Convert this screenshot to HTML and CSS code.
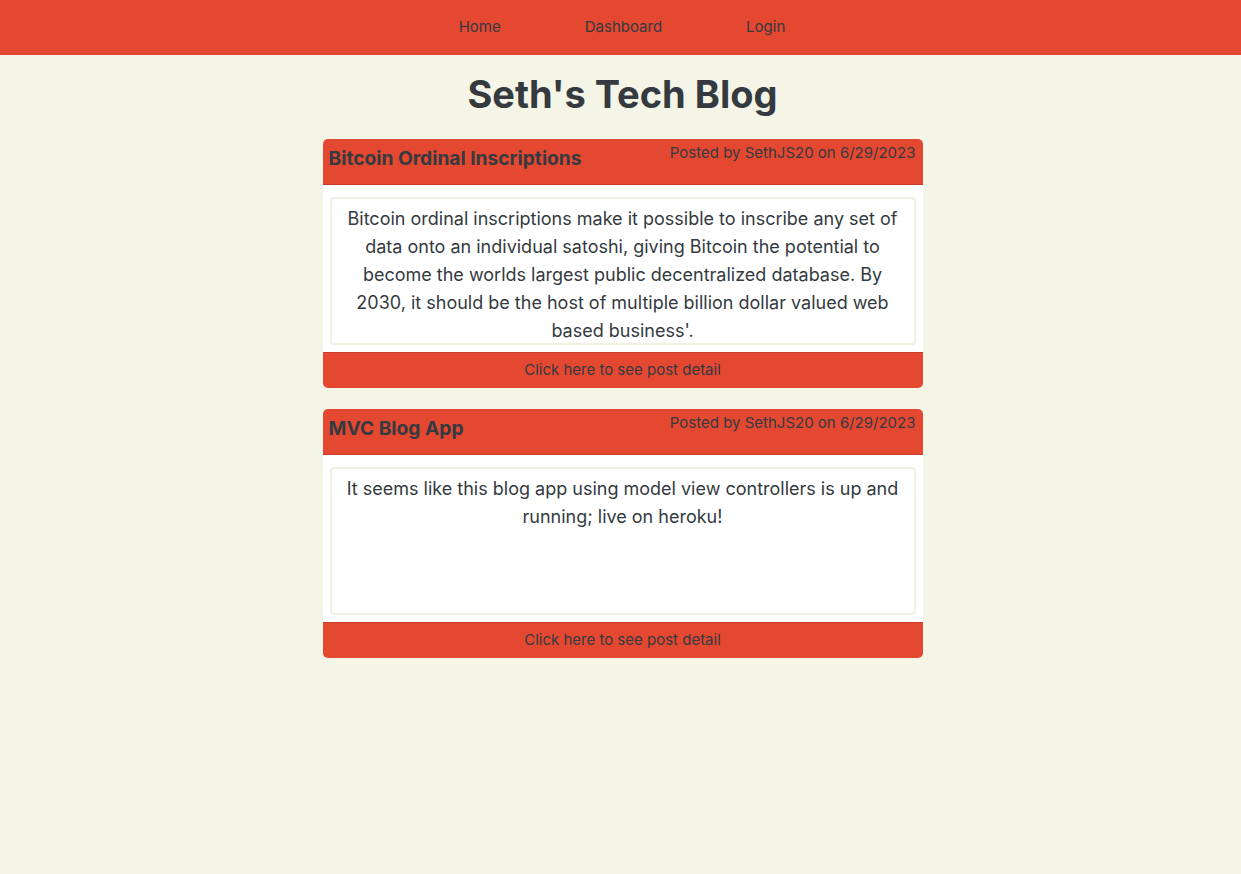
FILE: index.html
```html
<!DOCTYPE html>
<html lang="en">
<head>
<meta charset="utf-8">
<title>Seth's Tech Blog</title>
<link rel="stylesheet" href="styles.css">
</head>
<body>
<nav class="topnav">
  <a class="nav-link" href="#">Home</a>
  <a class="nav-link" href="#">Dashboard</a>
  <a class="nav-link" href="#">Login</a>
</nav>
<main class="content">
  <h1 class="site-title">Seth's Tech Blog</h1>
  <section class="posts">
    <article class="post-card">
      <header class="post-head">
        <h2 class="post-title">Bitcoin Ordinal Inscriptions</h2>
        <span class="post-meta">Posted by SethJS20 on 6/29/2023</span>
      </header>
      <div class="post-body">
        <p class="post-text">Bitcoin ordinal inscriptions make it possible to inscribe any set of data onto an individual satoshi, giving Bitcoin the potential to become the worlds largest public decentralized database. By 2030, it should be the host of multiple billion dollar valued web based business'.</p>
      </div>
      <a class="post-foot" href="#">Click here to see post detail</a>
    </article>
    <article class="post-card">
      <header class="post-head">
        <h2 class="post-title">MVC Blog App</h2>
        <span class="post-meta">Posted by SethJS20 on 6/29/2023</span>
      </header>
      <div class="post-body">
        <p class="post-text">It seems like this blog app using model view controllers is up and running; live on heroku!</p>
      </div>
      <a class="post-foot" href="#">Click here to see post detail</a>
    </article>
  </section>
</main>
</body>
</html>
```

FILE: styles.css
```css
* { box-sizing: border-box; }
html, body { margin: 0; padding: 0; }
body {
  background: #f4f4e7;
  color: #343a40;
  font-family: Inter, "Noto Sans", sans-serif;
  font-size: 15px;
  min-height: 874px;
}
.topnav {
  background: #e54831;
  height: 55px;
  display: flex;
  justify-content: center;
  align-items: center;
  padding-left: 3px;
}
.nav-link {
  color: #343a40;
  text-decoration: none;
  font-size: 15px;
  padding: 0 42px;
  line-height: 22px;
  margin-top: -2px;
}
.content {
  display: flex;
  flex-direction: column;
  align-items: center;
  padding-left: 4px;
}
.site-title {
  margin: 16px 0 22px;
  font-size: 38px;
  line-height: 46px;
  font-weight: 700;
  color: #343a40;
}
.posts {
  width: 600px;
  display: flex;
  flex-direction: column;
  gap: 21px;
}
.post-card {
  border-radius: 5px;
  overflow: hidden;
  background: #fff;
  display: flex;
  flex-direction: column;
}
.post-head {
  background: #e54831;
  height: 46px;
  border-bottom: 1px solid #c83d29;
  display: flex;
  justify-content: space-between;
  align-items: flex-start;
  padding: 3px 7px 0 6px;
}
.post-title {
  margin: 5px 0 0;
  font-size: 19.2px;
  line-height: 22px;
  font-weight: 700;
}
.post-meta {
  font-size: 15px;
  line-height: 22px;
}
.post-body {
  padding: 12px 7px 7px;
}
.post-text {
  margin: 0;
  height: 148px;
  overflow: hidden;
  border: 2px solid #f0f0e4;
  border-radius: 4px;
  text-align: center;
  font-size: 18px;
  line-height: 28px;
  padding: 6px 10px 0;
}
.post-foot {
  display: block;
  height: 36px;
  line-height: 34px;
  background: #e54831;
  border-top: 1px solid #c83d29;
  text-align: center;
  color: #343a40;
  text-decoration: none;
  font-size: 15px;
}
```
